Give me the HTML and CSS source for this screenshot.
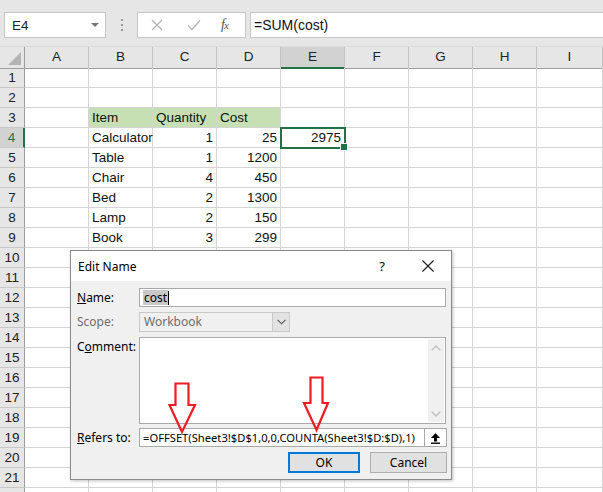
FILE: index.html
```html
<!DOCTYPE html>
<html>
<head>
<meta charset="utf-8">
<link rel="stylesheet" href="styles.css">
</head>
<body>
<div class="app">
  <div class="topbar">
    <div class="namebox"><span>E4</span><span class="dd"></span></div>
    <div class="grip"><i></i><i></i><i></i></div>
    <div class="fxbox">
      <svg class="ic" width="12" height="12" viewBox="0 0 12 12"><path d="M1 1L11 11M11 1L1 11" stroke="#b4b4b4" stroke-width="1.3" fill="none"/></svg>
      <svg class="ic" width="14" height="12" viewBox="0 0 14 12"><path d="M1 6.5L5 10.5L13 1.5" stroke="#b4b4b4" stroke-width="1.4" fill="none"/></svg>
      <span class="fx">f<span>x</span></span>
    </div>
    <div class="formula">=SUM(cost)</div>
  </div>

  <div class="sheet">
    <div class="row head">
      <div class="corner"><span></span></div>
      <div>A</div><div>B</div><div>C</div><div>D</div><div class="hsel">E</div><div>F</div><div>G</div><div>H</div><div>I</div>
    </div>
    <div class="row"><div class="rh">1</div><div></div><div></div><div></div><div></div><div></div><div></div><div></div><div></div><div></div></div>
    <div class="row"><div class="rh">2</div><div></div><div></div><div></div><div></div><div></div><div></div><div></div><div></div><div></div></div>
    <div class="row"><div class="rh">3</div><div></div><div class="g">Item</div><div class="g">Quantity</div><div class="g">Cost</div><div></div><div></div><div></div><div></div><div></div></div>
    <div class="row"><div class="rh rsel">4</div><div></div><div class="ovf">Calculator</div><div class="n">1</div><div class="n">25</div><div class="n active">2975</div><div></div><div></div><div></div><div></div></div>
    <div class="row"><div class="rh">5</div><div></div><div>Table</div><div class="n">1</div><div class="n">1200</div><div></div><div></div><div></div><div></div><div></div></div>
    <div class="row"><div class="rh">6</div><div></div><div>Chair</div><div class="n">4</div><div class="n">450</div><div></div><div></div><div></div><div></div><div></div></div>
    <div class="row"><div class="rh">7</div><div></div><div>Bed</div><div class="n">2</div><div class="n">1300</div><div></div><div></div><div></div><div></div><div></div></div>
    <div class="row"><div class="rh">8</div><div></div><div>Lamp</div><div class="n">2</div><div class="n">150</div><div></div><div></div><div></div><div></div><div></div></div>
    <div class="row"><div class="rh">9</div><div></div><div>Book</div><div class="n">3</div><div class="n">299</div><div></div><div></div><div></div><div></div><div></div></div>
    <div class="row"><div class="rh">10</div><div></div><div></div><div></div><div></div><div></div><div></div><div></div><div></div><div></div></div>
    <div class="row"><div class="rh">11</div><div></div><div></div><div></div><div></div><div></div><div></div><div></div><div></div><div></div></div>
    <div class="row"><div class="rh">12</div><div></div><div></div><div></div><div></div><div></div><div></div><div></div><div></div><div></div></div>
    <div class="row"><div class="rh">13</div><div></div><div></div><div></div><div></div><div></div><div></div><div></div><div></div><div></div></div>
    <div class="row"><div class="rh">14</div><div></div><div></div><div></div><div></div><div></div><div></div><div></div><div></div><div></div></div>
    <div class="row"><div class="rh">15</div><div></div><div></div><div></div><div></div><div></div><div></div><div></div><div></div><div></div></div>
    <div class="row"><div class="rh">16</div><div></div><div></div><div></div><div></div><div></div><div></div><div></div><div></div><div></div></div>
    <div class="row"><div class="rh">17</div><div></div><div></div><div></div><div></div><div></div><div></div><div></div><div></div><div></div></div>
    <div class="row"><div class="rh">18</div><div></div><div></div><div></div><div></div><div></div><div></div><div></div><div></div><div></div></div>
    <div class="row"><div class="rh">19</div><div></div><div></div><div></div><div></div><div></div><div></div><div></div><div></div><div></div></div>
    <div class="row"><div class="rh">20</div><div></div><div></div><div></div><div></div><div></div><div></div><div></div><div></div><div></div></div>
    <div class="row"><div class="rh">21</div><div></div><div></div><div></div><div></div><div></div><div></div><div></div><div></div><div></div></div>
    <div class="row"><div class="rh"></div><div></div><div></div><div></div><div></div><div></div><div></div><div></div><div></div><div></div></div>
  </div>

  <div class="dialog">
    <div class="titlebar">
      <span class="title">Edit Name</span>
      <span class="help">?</span>
      <svg class="close" width="12" height="12" viewBox="0 0 12 12"><path d="M0.5 0.5L11.5 11.5M11.5 0.5L0.5 11.5" stroke="#1a1a1a" stroke-width="1.1" fill="none"/></svg>
    </div>
    <div class="dbody">
      <div class="frow r-name">
        <label><u>N</u>ame:</label>
        <div class="input wide"><span class="sel">cost</span><span class="caret"></span></div>
      </div>
      <div class="frow r-scope">
        <label class="dis">Scope:</label>
        <div class="select">
          <span>Workbook</span>
          <span class="sbtn"><svg width="9" height="6" viewBox="0 0 9 6"><path d="M0.5 0.8L4.5 4.8L8.5 0.8" stroke="#555" stroke-width="1.1" fill="none"/></svg></span>
        </div>
      </div>
      <div class="frow r-comment">
        <label>C<u>o</u>mment:</label>
        <div class="textarea">
          <div class="sbar">
            <svg width="10" height="6" viewBox="0 0 10 6"><path d="M0.8 5.2L5 1L9.2 5.2" stroke="#c2c2c2" stroke-width="1.4" fill="none"/></svg>
            <svg width="10" height="6" viewBox="0 0 10 6"><path d="M0.8 0.8L5 5L9.2 0.8" stroke="#c2c2c2" stroke-width="1.4" fill="none"/></svg>
          </div>
        </div>
      </div>
      <div class="frow r-refers">
        <label><u>R</u>efers to:</label>
        <div class="refbox">
          <div class="input ref">=OFFSET(Sheet3!$D$1,0,0,COUNTA(Sheet3!$D:$D),1)</div>
          <div class="rbtn"><svg width="11" height="12" viewBox="0 0 11 12"><path d="M5.5 1L10 6H7V9.5H4V6H1Z" fill="#000"/><rect x="1" y="10.5" width="9" height="1.4" fill="#000"/></svg></div>
        </div>
      </div>
      <div class="buttons">
        <button class="btn ok">OK</button>
        <button class="btn">Cancel</button>
      </div>
    </div>
  </div>

  <svg class="arrows" width="603" height="492" viewBox="0 0 603 492">
    <path d="M175.5 383.5H188.5V405H195L182 432L169.5 405H175.5Z" fill="none" stroke="#ed1c24" stroke-width="2.2" stroke-linejoin="miter"/>
    <path d="M310.5 377.5H322.5V403H328L316.5 430L304 403H310.5Z" fill="none" stroke="#ed1c24" stroke-width="2.2" stroke-linejoin="miter"/>
  </svg>
</div>
</body>
</html>
```

FILE: styles.css
```css
* { box-sizing: border-box; }
html, body { margin: 0; padding: 0; }
body { width: 603px; height: 492px; overflow: hidden; background: #fff; font-family: "Liberation Sans", Arial, sans-serif; }

.app { position: relative; width: 603px; height: 492px; overflow: hidden; }

/* ---------- formula bar ---------- */
.topbar {
  height: 47px;
  background: #e6e6e6;
  display: flex;
  align-items: flex-start;
  padding-top: 12px;
  border-bottom: 1px solid #dadada;
}
.namebox {
  margin-left: 4px;
  width: 102px;
  height: 26px;
  background: #fff;
  border: 1px solid #c6c6c6;
  display: flex;
  align-items: center;
  justify-content: space-between;
  padding: 0 6px 0 7px;
  font-size: 13.5px;
  color: #222;
}
.namebox .dd {
  width: 0; height: 0;
  border-left: 4px solid transparent;
  border-right: 4px solid transparent;
  border-top: 4px solid #777;
}
.grip {
  width: 31px;
  height: 26px;
  display: flex;
  flex-direction: column;
  align-items: center;
  justify-content: center;
  gap: 3px;
}
.grip i { display: block; width: 2px; height: 2px; background: #9a9a9a; }
.fxbox {
  width: 109px;
  height: 26px;
  background: #fff;
  border: 1px solid #c6c6c6;
  display: flex;
  align-items: center;
  padding-left: 13px;
  gap: 0;
}
.fxbox .ic:first-child { margin-right: 24px; }
.fxbox .ic:nth-child(2) { margin-right: 20px; }
.fx {
  font-family: "Liberation Serif", serif;
  font-style: italic;
  font-size: 14px;
  color: #555;
  letter-spacing: -1px;
}
.fx span { font-size: 11px; }
.formula {
  margin-left: 4px;
  flex: 1;
  height: 26px;
  background: #fff;
  border: 1px solid #c6c6c6;
  border-right: none;
  display: flex;
  align-items: center;
  padding-left: 3px;
  font-size: 14px;
  color: #111;
}

/* ---------- sheet ---------- */
.sheet { background: #fff; }
.row {
  display: grid;
  grid-template-columns: 25px repeat(8, 64px) 66px;
  height: 20px;
}
.row > div {
  border-right: 1px solid #d4d4d4;
  border-bottom: 1px solid #d4d4d4;
  font-size: 13.5px;
  line-height: 19px;
  padding: 0 3px;
  color: #111;
  white-space: nowrap;
}
.row.head { height: 21px; background: #e6e6e6; }
.row.head > div {
  text-align: center;
  border-right: 1px solid #c2c2c2;
  border-bottom: 1px solid #9e9e9e;
  line-height: 20px;
  color: #222;
}
.row.head .corner { position: relative; border-right-color: #9e9e9e; }
.corner span {
  position: absolute;
  right: 3px; bottom: 3px;
  width: 0; height: 0;
  border-left: 13px solid transparent;
  border-bottom: 13px solid #b4b4b4;
}
.row.head .hsel { background: #d2d2d2; border-bottom: 2px solid #217346; line-height: 20px; }
.rh {
  background: #e6e6e6;
  text-align: center;
  border-right: 1px solid #9e9e9e !important;
  border-bottom: 1px solid #c8c8c8 !important;
  color: #222 !important;
  padding: 0 !important;
}
.rh.rsel { background: #d2d2d2; border-right: 2px solid #217346 !important; color: #217346 !important; }
.g { background: #c6e0b4; }
.n { text-align: right; }
.ovf { overflow: visible; }
.active {
  position: relative;
  outline: 2px solid #217346;
  outline-offset: -1px;
  z-index: 1;
}
.active::after {
  content: "";
  position: absolute;
  right: -4px; bottom: -4px;
  width: 6px; height: 6px;
  background: #217346;
  border: 1px solid #fff;
}

/* ---------- dialog ---------- */
.dialog {
  position: absolute;
  left: 70px; top: 250px;
  width: 382px; height: 230px;
  background: #f0f0f0;
  border: 1px solid #8a8a8a;
  box-shadow: 1px 1px 3px rgba(0,0,0,0.25);
  font-family: "Noto Sans", "Open Sans", sans-serif;
  font-size: 12px;
  color: #000;
  z-index: 5;
}
.titlebar {
  height: 30px;
  background: #fff;
  display: flex;
  align-items: center;
  padding-left: 7px;
}
.title { flex: 1; font-size: 12px; }
.help { font-size: 13px; margin-right: 37px; }
.close { margin-right: 17px; }
.dbody { padding: 7px 0 0 6px; }
.frow { display: flex; align-items: flex-start; }
.frow label { width: 62px; padding-top: 1px; }
.frow label.dis { color: #6d6d6d; }
.r-name { height: 24px; }
.r-scope { height: 25px; }
.r-comment { height: 91px; }
.r-refers { height: 24px; }
.input {
  height: 19px;
  background: #fff;
  border: 1px solid #a9a9a9;
  display: flex;
  align-items: center;
  padding-left: 3px;
}
.input.wide { width: 307px; }
.sel { background: #c8c8c8; line-height: 15px; padding: 0 1px; }
.caret { width: 1px; height: 14px; background: #000; }
.select {
  width: 151px;
  height: 20px;
  border: 1px solid #c9c9c9;
  display: flex;
  align-items: stretch;
  color: #6d6d6d;
  background: #f0f0f0;
}
.select span:first-child { flex: 1; padding-left: 4px; line-height: 18px; }
.sbtn {
  width: 17px;
  background: #e2e2e2;
  border-left: 1px solid #c9c9c9;
  display: flex; align-items: center; justify-content: center;
}
.textarea {
  width: 307px;
  height: 87px;
  background: #fff;
  border: 1px solid #a9a9a9;
  display: flex;
  justify-content: flex-end;
  padding: 1px;
}
.sbar {
  width: 16px;
  background: #f0f0f0;
  display: flex;
  flex-direction: column;
  justify-content: space-between;
  align-items: center;
  padding: 6px 0 5px;
}
.refbox { display: flex; }
.input.ref { width: 286px; padding-left: 3px; font-size: 11.2px; white-space: nowrap; overflow: hidden; }
.rbtn {
  width: 22px; height: 19px;
  background: #fff;
  border: 1px solid #a9a9a9;
  border-left: none;
  display: flex; align-items: center; justify-content: center;
}
.buttons { display: flex; gap: 10px; padding-left: 211px; padding-top: 0; }
.btn {
  font: inherit;
  height: 21px;
  background: #e1e1e1;
  border: 1px solid #adadad;
  color: #000;
  padding: 0;
}
.btn.ok { width: 72px; border: 2px solid #0078d7; }
.btn:not(.ok) { width: 77px; }

.arrows { position: absolute; left: 0; top: 0; z-index: 6; pointer-events: none; }
```
